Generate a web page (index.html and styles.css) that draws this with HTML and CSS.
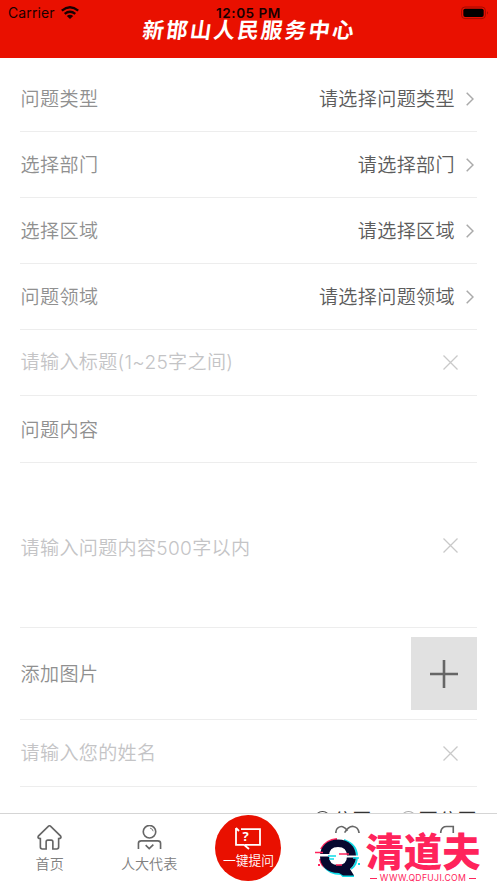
FILE: index.html
```html
<!DOCTYPE html>
<html lang="zh-CN">
<head>
<meta charset="utf-8">
<title>新邯山人民服务中心</title>
<link rel="stylesheet" href="styles.css">
</head>
<body>
<div class="app">
  <header class="header">
    <div class="status">
      <span class="carrier">Carrier</span>
      <svg class="wifi" viewBox="0 0 18 13"><g fill="none" stroke="#190000" stroke-width="2.3"><path d="M.8 4.6Q9-2.2 17.2 4.6"/><path d="M3.7 7.8Q9 3.6 14.3 7.8"/></g><path d="M5.8 10Q9 7.6 12.2 10L9 13Z" fill="#190000"/></svg>
      <span class="clock">12:05 PM</span>
      <svg class="battery" viewBox="0 0 30 14"><rect x=".6" y=".6" width="25.5" height="12.4" rx="3.6" fill="none" stroke="#9c0b00"/><rect x="2.5" y="2.4" width="21.8" height="8.8" rx="2" fill="#000"/><path d="M28 5v3.6q1-.5 1-1.8t-1-1.8" fill="#9c0b00"/></svg>
    </div>
    <h1 class="title">新邯山人民服务中心</h1>
  </header>
  <main class="form">
    <div class="row"><span>问题类型</span><span class="value">请选择问题类型</span><svg class="chev" viewBox="0 0 8 14"><path d="M.7.7 7 7 .7 13.3"/></svg></div>
    <div class="row"><span>选择部门</span><span class="value">请选择部门</span><svg class="chev" viewBox="0 0 8 14"><path d="M.7.7 7 7 .7 13.3"/></svg></div>
    <div class="row"><span>选择区域</span><span class="value">请选择区域</span><svg class="chev" viewBox="0 0 8 14"><path d="M.7.7 7 7 .7 13.3"/></svg></div>
    <div class="row"><span>问题领域</span><span class="value">请选择问题领域</span><svg class="chev" viewBox="0 0 8 14"><path d="M.7.7 7 7 .7 13.3"/></svg></div>
    <div class="row hint"><span>请输入标题(1~25字之间)</span><svg class="clear" viewBox="0 0 15 15"><path d="m.5.5 14 14m0-14-14 14"/></svg></div>
    <div class="row section"><span>问题内容</span></div>
    <div class="row hint content"><span>请输入问题内容500字以内</span><svg class="clear" viewBox="0 0 15 15"><path d="m.5.5 14 14m0-14-14 14"/></svg></div>
    <div class="row photos"><span>添加图片</span><div class="add"><svg viewBox="0 0 28 28"><path d="M14 0v28M0 14h28"/></svg></div></div>
    <div class="row hint name"><span>请输入您的姓名</span><svg class="clear" viewBox="0 0 15 15"><path d="m.5.5 14 14m0-14-14 14"/></svg></div>
    <div class="row options"><i class="radio on"></i><span class="public">公开</span><i class="radio"></i><span>不公开</span></div>
  </main>
  <nav class="tabs">
    <div class="tab">
      <svg class="icon" viewBox="0 0 26 26"><path d="M12 1.2Q13 .4 14 1.2L24.6 11.5Q25.8 14 22.5 14V23Q22.5 25 20.5 25H16.5V17.5Q16.5 15.7 14.8 15.7H11.2Q9.5 15.7 9.5 17.5V25H5.5Q3.5 25 3.5 23V14Q.2 14 1.4 11.5Z"/></svg>
      <span>首页</span>
    </div>
    <div class="tab">
      <svg class="icon" viewBox="0 0 26 26"><circle cx="13" cy="7" r="6.5"/><path d="M13.5 3.2Q16.3 3.6 16.8 6.5" stroke-width=".9"/><path d="M1.5 25V19Q1.5 16.5 4.5 16.5H21.5Q24.5 16.5 24.5 19V25"/><path d="m9 21 3.7 3.5 4.3-4"/></svg>
      <span>人大代表</span>
    </div>
    <div class="tab">
      <div class="ask">
        <svg class="bubble" viewBox="0 0 28 24"><path d="M7 2.2H26V17.8H11M2 1V17.8H10L15 22M2 1 5 4"/></svg>
        <b class="mark">?</b>
        <span>一键提问</span>
      </div>
    </div>
    <div class="tab"><svg class="icon" viewBox="0 0 26 26"><path d="M13 24 2.5 14Q-1 6 3 3 8-1 13 6 M10 8Q14 1 19 1.5 24 2 25 8L13 24"/></svg></div>
    <div class="tab"><svg class="icon last" viewBox="0 0 26 26"><path d="M6 12V7Q7 1.5 12 1.5H19V24H6Z"/></svg></div>
  </nav>
  <div class="watermark">
    <svg class="q" viewBox="0 0 48 42">
      <path d="M7 12Q12 3 23 2M12 31Q7 28 6 22" fill="none" stroke="#ff235b" stroke-width="2"/>
      <path d="M30 3Q43 8 43 19 43 28 37 32M10 29Q15 37 27 37L29 39H40" fill="none" stroke="#10dce8" stroke-width="2"/>
      <path fill="#07092f" fill-rule="evenodd" d="M24 2.5C35 2.5 42 10 42 19Q42 27 36 32L40 38.5H29L25 36C13 36 6 29 6 19S14 2.5 24 2.5M24 10Q15 10 15 19T24 28 33 19 24 10"/>
      <path d="M4 17h12v2.5H4zM31 18.5h13v2H31z" fill="#fff"/>
      <path d="M1 15.5h8M25 17h10M22 28h6" stroke="#ff235b" stroke-width="1.6"/>
      <path d="M14 19h8M15 22h5M39 21h6" stroke="#10dce8" stroke-width="1.6"/>
      <path d="M4 27h2v2H4z" fill="#ff235b"/><path d="M44 26h2v2h-2z" fill="#10dce8"/>
    </svg>
    <div class="brand"><strong>清道夫</strong><div class="url"><i></i><span>WWW.QDFUJI.COM</span><i></i></div></div>
  </div>
</div>
</body>
</html>
```
FILE: styles.css
```css
* { box-sizing: border-box; }
body { margin: 0; background: #fff; font-family: Inter, "Noto Sans CJK SC", sans-serif; }
.app { position: relative; width: 497px; height: 883px; overflow: hidden; display: flex; flex-direction: column; }
.header { position: relative; height: 58px; flex: none; background: #e91000; padding-top: 13px; }
.status { position: absolute; z-index: 1; inset: 4px 8px auto 8px; height: 18px; display: flex; align-items: center; color: #190000; font-size: 14px; line-height: 18px; }
.carrier { letter-spacing: .1px; }
.wifi { width: 18px; height: 13px; margin: 0 0 2px 6px; }
.clock { position: absolute; left: 0; right: 0; text-align: center; font-size: 13.6px; font-weight: 600; letter-spacing: .5px; }
.battery { width: 28px; height: 14px; margin-left: auto; margin-right: 0; }
.title { margin: 0 0 0 2px; text-align: center; color: #fff; font: 700 21.5px/32px "Noto Sans CJK SC", sans-serif; letter-spacing: 2.2px; transform: skewX(-8deg); }
.form { height: 755px; flex: none; overflow: hidden; padding: 8px 20px 0; }
.row { height: 66px; display: flex; align-items: center; border-bottom: 1px solid #ededed; font-size: 19.1px; line-height: 28px; letter-spacing: .35px; font-weight: 350; color: #909090; padding-left: .6px; white-space: nowrap; }
.value { margin-left: auto; color: #5c5c5c; }
.chev { width: 8px; height: 14px; margin: 1px 3px 0 11px; fill: none; stroke: #aaa; stroke-width: 1.5; }
.hint { color: #c4c4c6; }
.hint span { margin-top: -1px; letter-spacing: .3px; }
.clear { width: 15px; height: 15px; margin: 0 19px 0 auto; fill: none; stroke: #c9c9c9; stroke-width: 1.3; }
.section { height: 67px; padding-top: 1px; }
.content { height: 165px; padding-top: 6px; }
.content .clear { margin-top: -6px; }
.photos { height: 92px; }
.name { height: 67px; }
.add { width: 66px; height: 73px; margin-left: auto; background: #e1e1e1; display: grid; place-items: center; }
.add svg { width: 28px; height: 28px; fill: none; stroke: #666; stroke-width: 2.6; }
.options { justify-content: flex-end; color: #333; }
.radio { width: 17px; height: 18px; border: 1px solid #aaa; border-radius: 50%; margin-right: 2px; }
.radio.on { border-color: #444; margin-right: 2px; }
.public { margin-right: 28px; }
.tabs { height: 70px; flex: none; border-top: 1px solid #d5d5d5; background: #fff; display: grid; grid-template-columns: repeat(5, 1fr); }
.tab { display: flex; flex-direction: column; align-items: center; padding-top: 11px; color: #808080; font-size: 14.1px; line-height: 20px; font-weight: 350; }
.icon { width: 25px; height: 25px; fill: none; stroke: #666; stroke-width: 1.7; margin-bottom: 4px; }
.ask { position: relative; width: 66px; height: 66px; margin-top: -10px; border-radius: 50%; background: #e91000; color: #fff; display: flex; flex-direction: column; align-items: center; padding-top: 12px; font-size: 12.8px; white-space: nowrap; }
.bubble { width: 28px; height: 24px; fill: none; stroke: #fff; stroke-width: 1.8; }
.mark { position: absolute; top: 12px; left: 27px; font: 700 13px/18px "Open Sans", sans-serif; }
.watermark { position: absolute; left: 313px; top: 833px; width: 184px; height: 50px; background: #fff; display: flex; padding: 4px 0 0 1px; }
.q { width: 48px; height: 42px; flex: none; }
.brand { width: 120px; margin-left: 1px; color: #ff235b; display: flex; flex-direction: column; align-items: center; }
.brand strong { font: 900 38.3px/36px "Noto Sans CJK SC", sans-serif; margin-top: -5px; }
.url { display: flex; align-items: center; gap: 3px; font: 400 8.7px/12px Inter, sans-serif; letter-spacing: .3px; margin-top: 4px; }
.url i { width: 7px; height: 1px; background: #ff235b; }
```
